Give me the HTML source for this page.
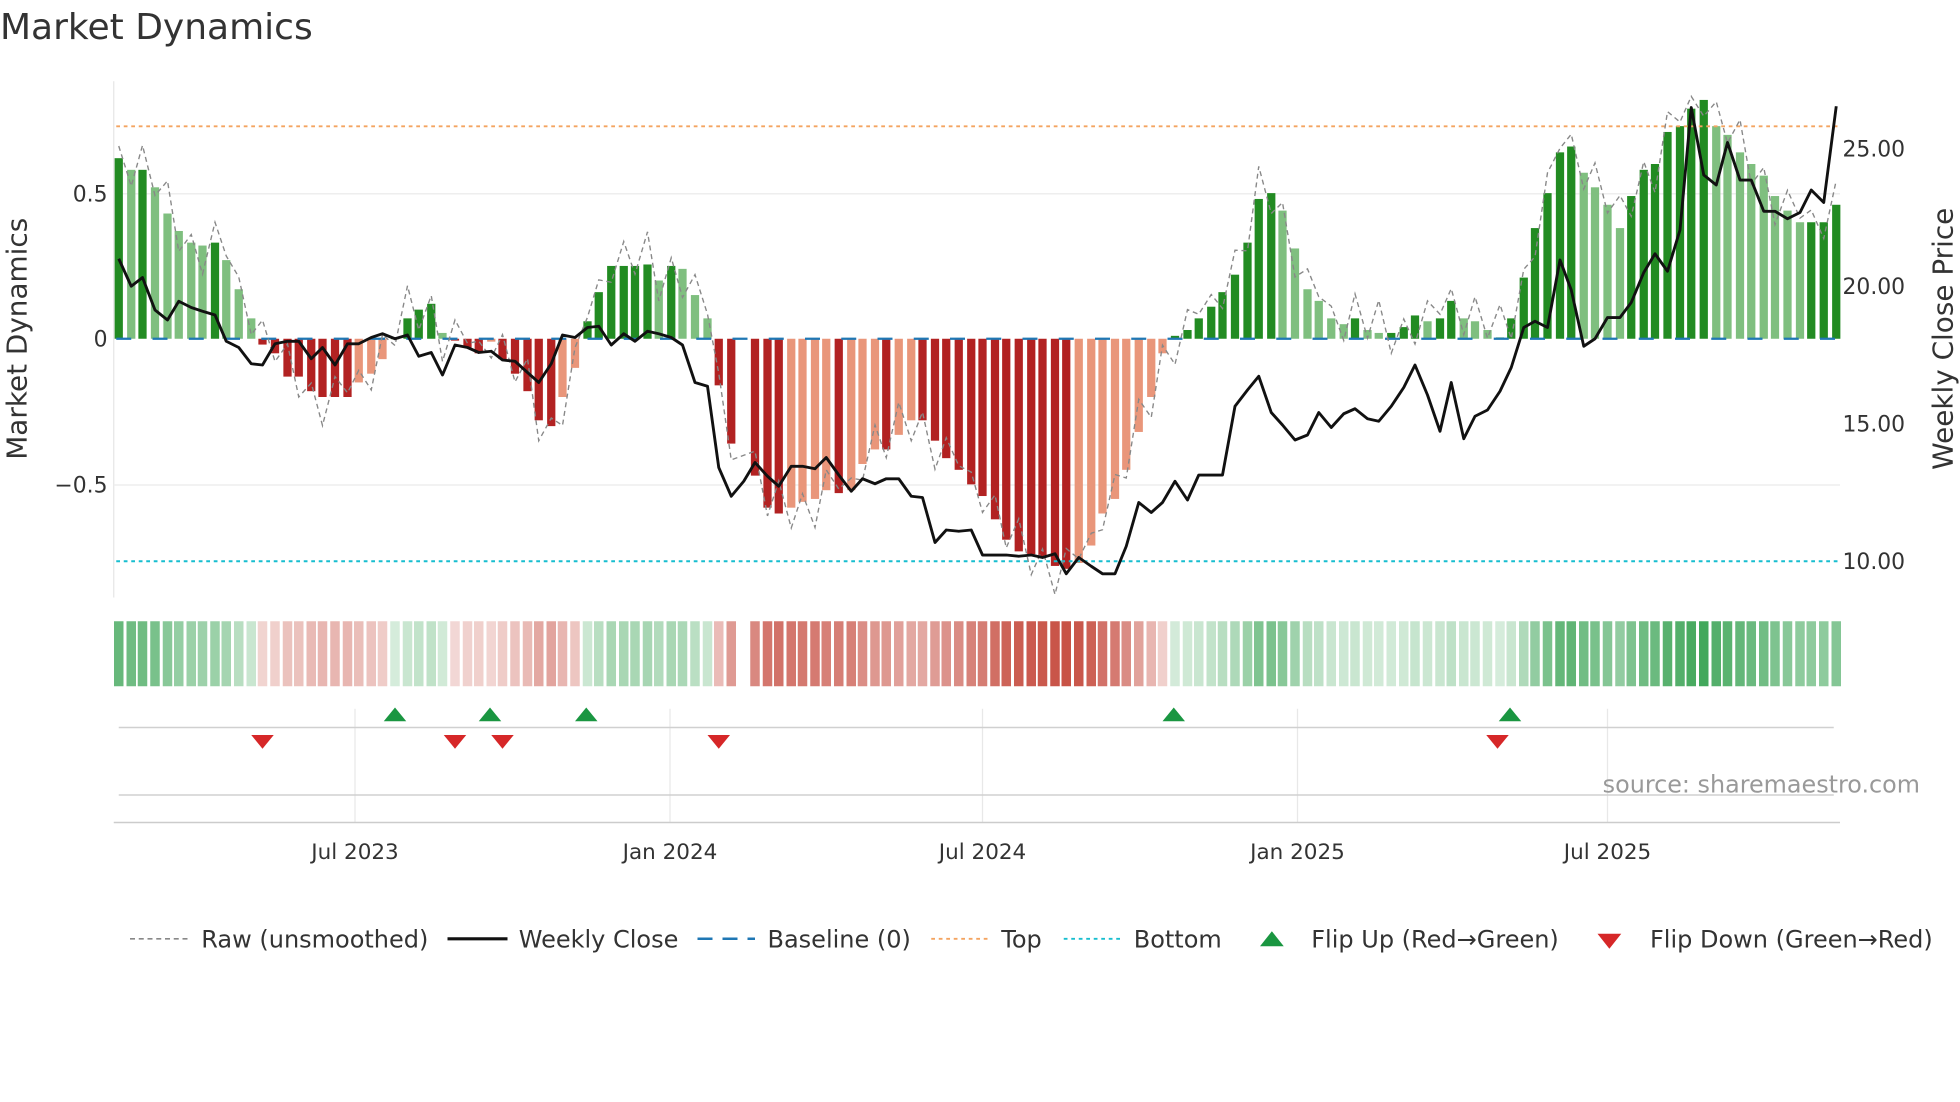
<!DOCTYPE html>
<html><head><meta charset="utf-8"><style>
html,body{margin:0;padding:0;background:#fff;}
svg{display:block;font-family:"DejaVu Sans","Liberation Sans",sans-serif;}
</style></head><body>
<svg id="c" width="1960" height="1102" viewBox="0 0 1568 881.6" xmlns="http://www.w3.org/2000/svg">
<text x="0" y="31" font-size="28.8" fill="#333">Market Dynamics</text>
<line x1="91" y1="65" x2="91" y2="478" stroke="#e6e6e6" stroke-width="1"/>
<line x1="91" y1="155" x2="1472" y2="155" stroke="#eeeeee" stroke-width="1.2"/>
<line x1="91" y1="388" x2="1472" y2="388" stroke="#eeeeee" stroke-width="1.2"/>
<g font-size="17.5" fill="#333" text-anchor="end">
<text x="86" y="161">0.5</text><text x="86" y="277">0</text><text x="86" y="394">−0.5</text></g>
<g font-size="17.5" fill="#333">
<text x="1474" y="125">25.00</text><text x="1474" y="235">20.00</text><text x="1474" y="345">15.00</text><text x="1474" y="455">10.00</text></g>
<text transform="translate(21,271) rotate(-90)" font-size="22.3" fill="#333" text-anchor="middle">Market Dynamics</text>
<text transform="translate(1562,271) rotate(-90)" font-size="22.3" fill="#333" text-anchor="middle">Weekly Close Price</text>
<g id="bars"></g>
<line x1="93" y1="101" x2="1470" y2="101" stroke="#f4a460" stroke-width="1.5" stroke-dasharray="3,3"/>
<line x1="93" y1="449" x2="1470" y2="449" stroke="#17becf" stroke-width="1.6" stroke-dasharray="3,3"/>
<line x1="93" y1="271" x2="1470" y2="271" stroke="#1f77b4" stroke-width="1.8" stroke-dasharray="12,17"/>
<polyline id="raw" fill="none" stroke="#888" stroke-width="1.1" stroke-dasharray="4,3"/>
<polyline id="price" fill="none" stroke="#111" stroke-width="2.3" stroke-linejoin="round"/>
<g id="strip"></g>
<g stroke="#e8e8e8" stroke-width="1">
<line x1="284" y1="567" x2="284" y2="658"/><line x1="536" y1="567" x2="536" y2="658"/><line x1="786" y1="567" x2="786" y2="658"/><line x1="1038" y1="567" x2="1038" y2="658"/><line x1="1286" y1="567" x2="1286" y2="658"/></g>
<line x1="95" y1="582" x2="1467" y2="582" stroke="#d0d0d0" stroke-width="1.2"/>
<line x1="95" y1="636" x2="1467" y2="636" stroke="#d0d0d0" stroke-width="1.2"/>
<line x1="91" y1="658" x2="1472" y2="658" stroke="#ccc" stroke-width="1.2"/>
<g id="flips"></g>
<text x="1536" y="634" font-size="19.1" fill="#999" text-anchor="end">source: sharemaestro.com</text>
<g font-size="17.2" fill="#333" text-anchor="middle">
<text x="284" y="687">Jul 2023</text><text x="536" y="687">Jan 2024</text><text x="786" y="687">Jul 2024</text><text x="1038" y="687">Jan 2025</text><text x="1286" y="687">Jul 2025</text></g>
<g font-size="19.2" fill="#333">
<line x1="104" y1="751" x2="150" y2="751" stroke="#888" stroke-width="1.3" stroke-dasharray="4,3"/>
<text x="161" y="758">Raw (unsmoothed)</text>
<line x1="358" y1="751" x2="406" y2="751" stroke="#111" stroke-width="2.5"/>
<text x="415" y="758">Weekly Close</text>
<line x1="558" y1="751" x2="604" y2="751" stroke="#1f77b4" stroke-width="2" stroke-dasharray="12,8"/>
<text x="614" y="758">Baseline (0)</text>
<line x1="745" y1="751" x2="791" y2="751" stroke="#f4a460" stroke-width="1.5" stroke-dasharray="3,3"/>
<text x="801" y="758">Top</text>
<line x1="851" y1="751" x2="897" y2="751" stroke="#17becf" stroke-width="1.5" stroke-dasharray="3,3"/>
<text x="907" y="758">Bottom</text>
<polygon points="1008,757 1027,757 1017.5,745" fill="#1a9641"/>
<text x="1049" y="758">Flip Up (Red→Green)</text>
<polygon points="1278,747 1297,747 1287.5,759" fill="#d62728"/>
<text x="1320" y="758">Flip Down (Green→Red)</text>
</g>
</svg>
<script>
var B=[[95,.62],[105,.58],[114,.58],[124,.52],[134,.43],[143,.37],[153,.33],[162,.32],[172,.33],[181,.27],[191,.17],[201,.07],[210,-.02],[220,-.05],[230,-.13],[239,-.13],[249,-.18],[258,-.2],[268,-.2],[278,-.2],[287,-.15],[297,-.12],[306,-.07],[316,0.005],[326,.07],[335,.1],[345,.12],[354,.02],[364,-0.005],[374,-.03],[383,-.05],[393,-.01],[402,-.07],[412,-.12],[422,-.18],[431,-.28],[441,-.3],[450,-.2],[460,-.1],[470,.06],[479,.16],[489,.25],[499,.25],[508,.25],[518,.255],[527,.2],[537,.25],[546,.24],[556,.15],[566,.07],[575,-.16],[585,-.36],[604,-.47],[614,-.58],[623,-.6],[633,-.58],[642,-.56],[652,-.55],[661,-.52],[671,-.53],[681,-.52],[690,-.43],[700,-.38],[709,-.38],[719,-.33],[729,-.28],[738,-.28],[748,-.35],[757,-.41],[767,-.45],[777,-.5],[786,-.54],[796,-.62],[805,-.69],[815,-.73],[825,-.74],[834,-.75],[844,-.78],[853,-.79],[863,-.77],[873,-.71],[882,-.6],[892,-.55],[901,-.45],[911,-.32],[921,-.2],[930,-.05],[940,.01],[950,.03],[959,.07],[969,.11],[978,.16],[988,.22],[998,.33],[1007,.48],[1017,.5],[1026,.44],[1036,.31],[1046,.17],[1055,.13],[1065,.07],[1075,.05],[1084,.07],[1094,.03],[1103,.02],[1113,.02],[1123,.04],[1132,.08],[1142,.06],[1152,.07],[1161,.13],[1171,.07],[1180,.06],[1190,.03],[1200,.005],[1209,.07],[1219,.21],[1228,.38],[1238,.5],[1248,.64],[1257,.66],[1267,.57],[1276,.52],[1286,.46],[1296,.38],[1305,.49],[1315,.58],[1324,.6],[1334,.71],[1344,.73],[1353,.79],[1363,.82],[1373,.73],[1382,.7],[1392,.64],[1401,.6],[1411,.56],[1420,.49],[1430,.44],[1440,.4],[1449,.4],[1459,.4],[1469,.46]];
var P=[[95,207],[105,229],[114,222],[124,248],[134,256],[143,241],[153,246],[162,249],[172,252],[181,273],[191,278],[201,291],[210,292],[220,275],[230,273],[239,273],[249,287],[258,278],[268,292],[278,275],[287,275],[297,270],[306,267],[316,271],[326,268],[335,285],[345,282],[354,300],[364,276],[374,278],[383,282],[393,281],[402,288],[412,289],[422,298],[431,306],[441,291],[450,268],[460,270],[470,262],[479,261],[489,276],[499,267],[508,273],[518,265],[527,267],[537,270],[546,276],[556,306],[566,309],[575,374],[585,397],[595,385],[604,370],[614,381],[623,389],[633,373],[642,373],[652,375],[661,366],[671,380],[681,393],[690,383],[700,387],[709,383],[719,383],[729,397],[738,398],[748,434],[757,424],[767,425],[777,424],[786,444],[796,444],[805,444],[815,445],[825,444],[834,446],[844,443],[853,459],[863,446],[873,453],[882,459],[892,459],[901,437],[911,402],[921,410],[930,402],[940,385],[950,400],[959,380],[969,380],[978,380],[988,325],[998,312],[1007,301],[1017,330],[1026,340],[1036,352],[1046,348],[1055,330],[1065,342],[1075,331],[1084,327],[1094,335],[1103,337],[1113,325],[1123,310],[1132,292],[1142,316],[1152,345],[1161,306],[1171,351],[1180,333],[1190,328],[1200,313],[1209,294],[1219,262],[1228,257],[1238,262],[1248,208],[1257,232],[1267,277],[1276,271],[1286,254],[1296,254],[1305,242],[1315,218],[1324,203],[1334,217],[1344,184],[1353,86],[1363,140],[1373,148],[1382,114],[1392,144],[1401,144],[1411,169],[1420,169],[1430,175],[1440,170],[1449,152],[1459,162],[1469,85]];
var NS="http://www.w3.org/2000/svg";
function el(t,a,p){var e=document.createElementNS(NS,t);for(var k in a)e.setAttribute(k,a[k]);p.appendChild(e);return e;}
var gb=document.getElementById('bars'),gs=document.getElementById('strip');
var rawPts=[];var noise=[.03,-.04,.06,-.02,.08,-.05,.02,-.07,.05,.01];
for(var i=0;i<B.length;i++){var x=B[i][0],v=B[i][1],pv=i?B[i-1][1]:v;var c;
 if(v>=0)c=(v>=pv)?'#228b22':'#7fbf7f';else c=(v<=pv)?'#b22222':'#e9967a';
 var y0=271,y1=271-v*233;el('rect',{x:x-3.3,y:Math.min(y0,y1),width:6.6,height:Math.max(1.5,Math.abs(y1-y0)),fill:c},gb);
 el('rect',{x:x-3.8,y:497,width:7.6,height:52,fill:v>=0?'#2e9e4a':'#c0392b','fill-opacity':(0.2+Math.abs(v)*0.85).toFixed(2)},gs);
 rawPts.push(x+','+(271-(v+noise[i%10]*1.4)*233).toFixed(1));}
document.getElementById('raw').setAttribute('points',rawPts.join(' '));
document.getElementById('price').setAttribute('points',P.map(function(p){return p.join(',')}).join(' '));
var gf=document.getElementById('flips');
[316,392,469,939,1208].forEach(function(x){el('polygon',{points:(x-9)+',577 '+(x+9)+',577 '+x+',566',fill:'#1a9641'},gf);});
[210,364,402,575,1198].forEach(function(x){el('polygon',{points:(x-9)+',588 '+(x+9)+',588 '+x+',599',fill:'#d62728'},gf);});
</script>
</body></html>
